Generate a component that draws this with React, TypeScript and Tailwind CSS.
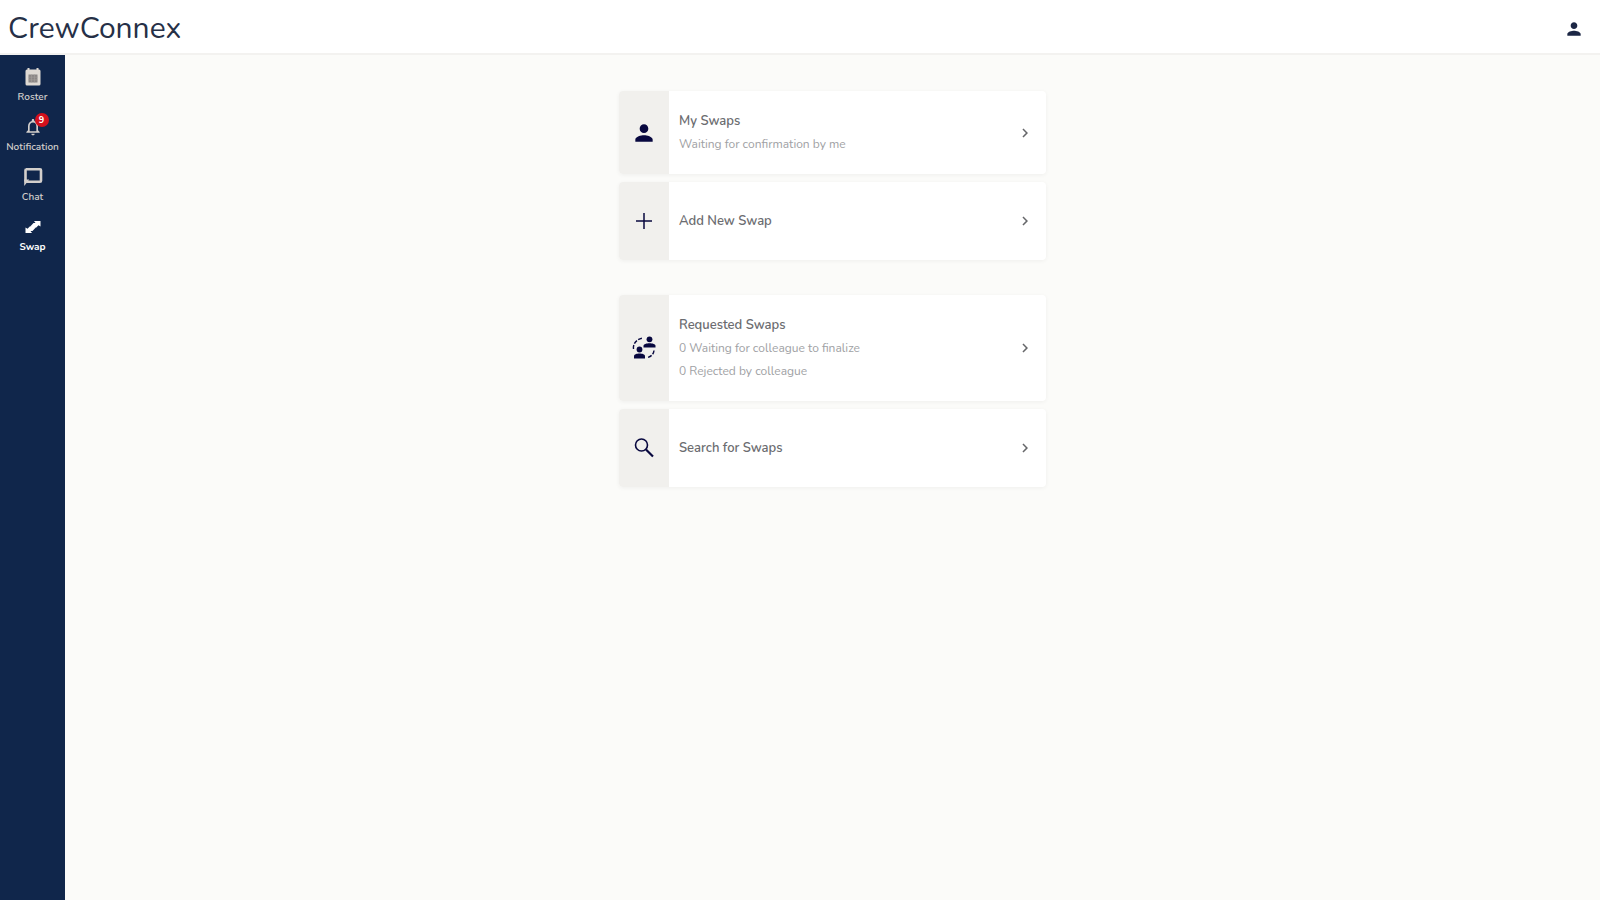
import type { ReactNode } from 'react';
import { MdChevronRight, MdNotificationsNone, MdPerson } from 'react-icons/md';

function RosterIcon() {
  return (
    <svg viewBox="0 0 18 20" className="h-5 w-[18px]" fill="none" aria-hidden="true">
      <path d="M3 2.5h12a1.5 1.5 0 0 1 1.5 1.5v13a1.5 1.5 0 0 1-1.5 1.5H3A1.5 1.5 0 0 1 1.5 17V4A1.5 1.5 0 0 1 3 2.5z" fill="#ded9d3" />
      <path d="M4.5 1v3M13.5 1v3" stroke="#ded9d3" strokeWidth="2" />
      <path d="M4.5 7.5h9v8h-9z" fill="#8b8685" />
      <path d="M4.5 10.2h9M4.5 12.8h9M7.5 7.5v8M10.5 7.5v8" stroke="#a39e9b" strokeWidth=".6" />
    </svg>
  );
}

function ChatIcon() {
  return (
    <svg viewBox="0 0 20 20" className="size-5" fill="none" stroke="currentColor" aria-hidden="true">
      <path d="M3 2.2h14a1 1 0 0 1 1 1v10.600a1 1 0 0 1-1 1H3.500a1 1 0 0 1-1-1V3.200a1 1 0 0 1 1-1z" strokeWidth="2.600" />
      <path d="M1.200 12.500h5L1.200 19z" fill="currentColor" stroke="none" />
    </svg>
  );
}

function SwapIcon() {
  return (
    <svg viewBox="0 0 20 16" className="h-4 w-5" fill="currentColor" aria-hidden="true">
      <path d="M11 2h6.500v5.500l-2-1.200-2.500 2.400H9L7.700 7l2.800-3h2z" />
      <path d="M9 14H2.500V8.500l2 1.200L7 7.300h4L12.300 9l-2.800 3h-2z" />
    </svg>
  );
}

function PlusIcon() {
  return (
    <svg viewBox="0 0 24 24" className="size-6" fill="none" stroke="currentColor" strokeWidth="1.5" aria-hidden="true">
      <path d="M12 4v16M4 12h16" />
    </svg>
  );
}

function SearchIcon() {
  return (
    <svg viewBox="0 0 24 24" className="size-6" fill="none" stroke="currentColor" aria-hidden="true">
      <circle cx="9.500" cy="9" r="6" strokeWidth="1.600" />
      <path d="M14 13.500l7 7" strokeWidth="2.200" />
    </svg>
  );
}

function RequestedIcon() {
  return (
    <svg viewBox="0 0 24 24" className="size-6" fill="currentColor" aria-hidden="true">
      <circle cx="17.500" cy="3.300" r="2.900" />
      <path d="M11.500 11.500V9.800c0-1.800 3-2.600 6-2.600s6 .8 6 2.600v1.700z" />
      <circle cx="7.500" cy="13.500" r="2.900" />
      <path d="M2 22.500v-2.300c0-2 2.700-2.800 5.500-2.800s5.500.8 5.500 2.800v2.300z" />
      <path
        d="M1.500 13c-.8-5 3-10 9.500-11M22 14.500c-.3 3.500-2.700 6-6.500 7"
        fill="none"
        stroke="currentColor"
        strokeWidth="1.400"
        strokeDasharray="4 1.500"
      />
    </svg>
  );
}

type NavItemProps = { label: string; icon: ReactNode; badge?: string; active?: boolean };

function NavItem({ label, icon, badge, active }: NavItemProps) {
  return (
    <a
      href="#"
      aria-current={active ? 'page' : undefined}
      className={`flex h-[50px] flex-col items-center text-[10px] leading-4 ${active ? 'font-bold text-white' : 'font-semibold text-[#d3cfcc]'}`}
    >
      <span className="relative flex h-6 items-center">
        {icon}
        {badge && (
          <span className="absolute -right-1.5 -top-0.5 flex size-3.5 items-center justify-center rounded-full bg-[#d4101c] text-[9px] font-bold text-white">
            {badge}
          </span>
        )}
      </span>
      {label}
    </a>
  );
}

type SwapCardProps = { title: string; lines?: string[]; icon: ReactNode };

function SwapCard({ title, lines = [], icon }: SwapCardProps) {
  return (
    <a href="#" className="flex min-h-[78px] rounded-sm bg-white shadow-[0_1px_4px_rgba(0,0,0,0.05)]">
      <span className="flex w-[50px] shrink-0 items-center justify-center rounded-l-sm bg-[#f1f0ed] text-[#08083f]">
        {icon}
      </span>
      <span className="flex flex-1 flex-col justify-center px-2.5 py-[18px]">
        <span className="text-[13px] font-semibold leading-6 text-[#6b6c70]">{title}</span>
        {lines.map((line) => (
          <span key={line} className="text-xs leading-[23px] text-[#a0a1a4]">
            {line}
          </span>
        ))}
      </span>
      <span className="flex items-center pr-3 text-[#66676a]">
        <MdChevronRight size={18} />
      </span>
    </a>
  );
}

export default function App() {
  return (
    <div className="flex min-h-screen flex-col bg-[#fbfbf9] font-['Nunito','Lato',sans-serif]">
      <header className="flex h-[55px] items-center justify-between border-b-2 border-[#f3f2f0] bg-white pl-2 pr-4 pt-1">
        <h1 className="text-[30px] leading-10 text-[#263047]">CrewConnex</h1>
        <button type="button" aria-label="Account" className="text-[#1c2745]">
          <MdPerson size={20} />
        </button>
      </header>
      <div className="flex flex-1">
        <nav className="flex w-[65px] shrink-0 flex-col bg-[#10264b] pt-2.5">
          <NavItem label="Roster" icon={<RosterIcon />} />
          <NavItem label="Notification" icon={<MdNotificationsNone size={20} />} badge="9" />
          <NavItem label="Chat" icon={<ChatIcon />} />
          <NavItem label="Swap" icon={<SwapIcon />} active />
        </nav>
        <main className="flex flex-1 flex-col items-center gap-[35px] pt-9">
          <section className="flex w-full max-w-[427px] flex-col gap-2">
            <SwapCard title="My Swaps" lines={['Waiting for confirmation by me']} icon={<MdPerson size={26} />} />
            <SwapCard title="Add New Swap" icon={<PlusIcon />} />
          </section>
          <section className="flex w-full max-w-[427px] flex-col gap-2">
            <SwapCard
              title="Requested Swaps"
              lines={['0 Waiting for colleague to finalize', '0 Rejected by colleague']}
              icon={<RequestedIcon />}
            />
            <SwapCard title="Search for Swaps" icon={<SearchIcon />} />
          </section>
        </main>
      </div>
    </div>
  );
}
